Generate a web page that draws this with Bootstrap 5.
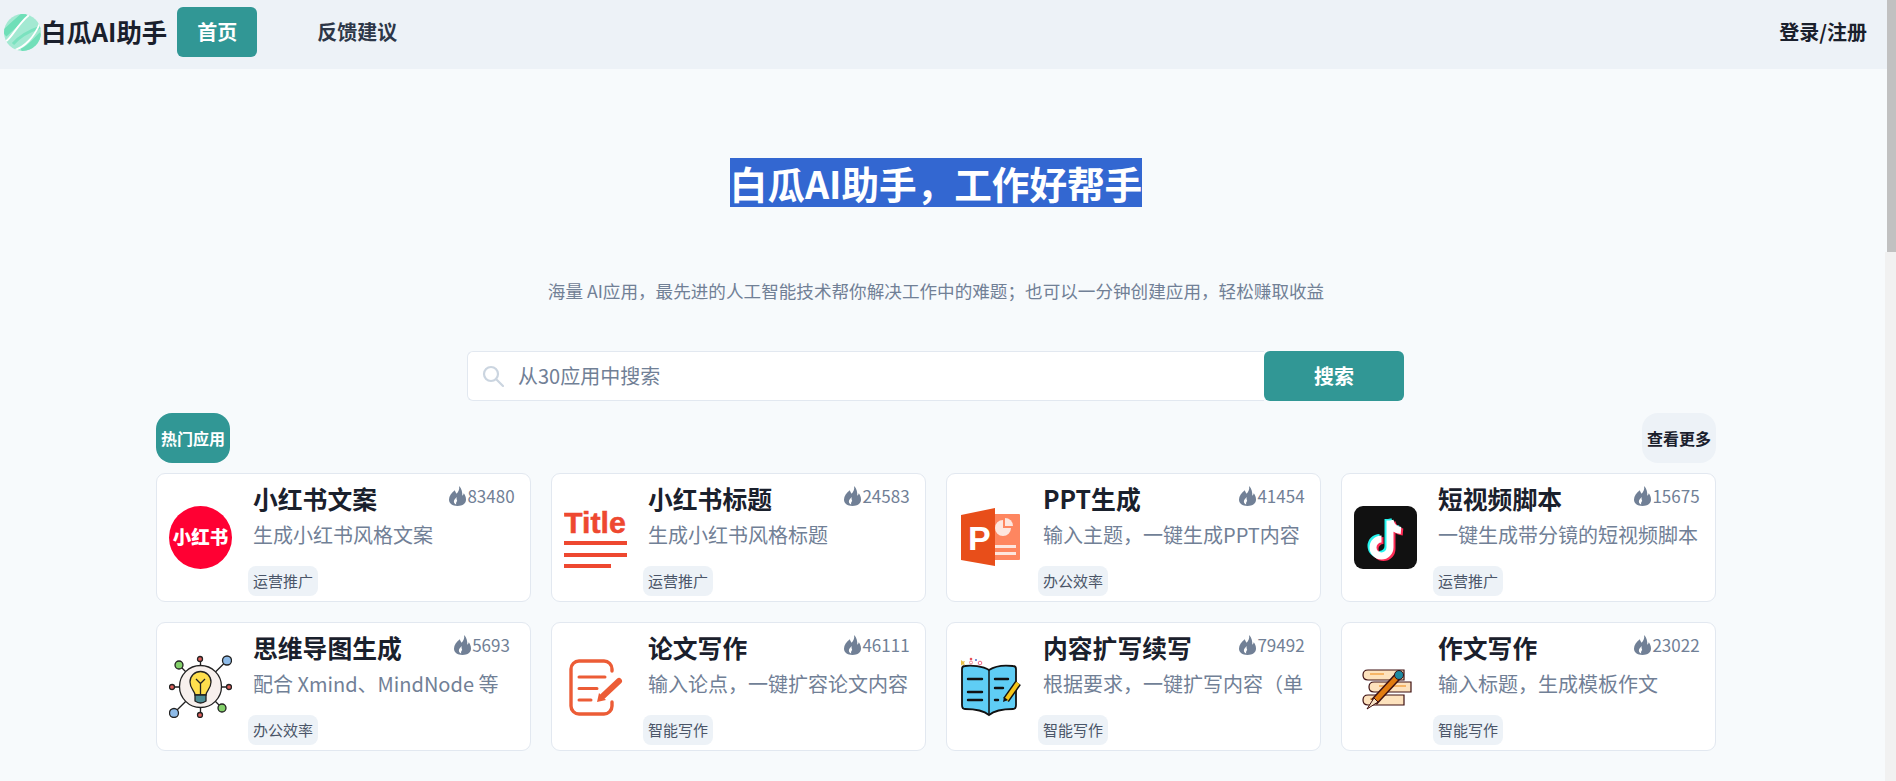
<!DOCTYPE html>
<html lang="zh-CN">
<head>
    <meta charset="UTF-8">
    <meta name="viewport" content="width=device-width, initial-scale=1.0">
    <title>白瓜AI助手</title>
    <link rel="stylesheet" href="https://cdn.jsdelivr.net/npm/bootstrap@5.3.0/dist/css/bootstrap.min.css">
    <style>
        body {
            background: #f7fafc;
            color: #1a202c;
            font-family: "Noto Sans CJK SC", sans-serif;
        }
        .top-bar { background: #edf2f7; height: 69px; padding: 0 29px 5px 4px; }
        .brand-link { color: #1a202c; font-size: 25.4px; font-weight: 700; text-decoration: none; gap: 0; line-height: 1; }
        .brand-link svg { width: 37px; height: 37px; }
        .menu-link { color: #2d3748; font-size: 20px; font-weight: 700; text-decoration: none; line-height: 50px; height: 50px; border-radius: 6px; width: 80px; text-align: center; }
        .menu-link.is-current { background: #319795; color: #fff; margin: 0 60px 0 10px; }
        .login-link { color: #1a202c; font-size: 20px; font-weight: 700; text-decoration: none; }
        .scroll-thumb { width: 9px; height: 252px; background: #c1c1c1; z-index: 10; }
        .scroll-track { width: 11px; top: 252px; bottom: 0; background: #f1f1f1; z-index: 10; }
        .page-wrap { width: 1560px; margin-left: 156px; }
        .hero-title { margin: 89px 0 0; font-size: 37.6px; font-weight: 700; line-height: 49px; }
        .hero-title span { background: #3367d1; color: #fff; }
        .hero-sub { margin: 69px 0 0; font-size: 17.6px; line-height: 30px; color: #718096; }
        .search-row { width: 937px; height: 50px; margin: 45px 0 0 311px; }
        .search-box { background: #fff; border: 1px solid #e2e8f0; border-radius: 6px 0 0 6px; border-right: 0; padding-left: 14px; gap: 14px; }
        .search-box svg { width: 22px; height: 22px; flex: none; }
        .search-box input { border: 0; background: transparent; padding: 0; font-size: 20px; color: #1a202c; box-shadow: none; }
        .search-box input::placeholder { color: #718096; opacity: 1; }
        .search-btn { width: 140px; background: #319795; color: #fff; font-size: 20px; font-weight: 700; border: 0; border-radius: 6px; }
        .section-head { margin-top: 12px; margin-bottom: 10px; }
        .pill-hot, .pill-more { height: 50px; width: 74px; border-radius: 16px; font-size: 16px; font-weight: 700; line-height: 50px; text-align: center; white-space: nowrap; text-decoration: none; }
        .pill-hot { background: #319795; color: #fff; }
        .pill-more { background: #edf2f7; color: #1a202c; }
        .app-row { --bs-gutter-x: 20px; --bs-gutter-y: 20px; }
        .app-card { height: 129px; background: #fff; border: 1px solid #e2e8f0; border-radius: 9px; flex-direction: row; align-items: center; padding-left: 12px; }
        .app-logo { width: 63px; height: 63px; flex: none; margin-right: 16px; }
        .app-body { height: 100%; padding: 4px 6px 5px 0; }
        .app-title { margin: 0; padding-left: 5px; font-size: 24.8px; font-weight: 700; line-height: 40px; white-space: nowrap; }
        .app-hot { width: 84px; flex: none; height: 36px; font-size: 17px; color: #718096; gap: 1px; }
        .app-hot svg { width: 17px; height: 20px; flex: none; }
        .app-desc { padding-left: 5px; font-size: 20px; line-height: 30px; color: #718096; white-space: nowrap; margin-top: 2px; }
        .app-tag { width: 70px; height: 30px; margin-top: auto; background: #edf2f7; color: #4a5568; border-radius: 8px; font-size: 15px; line-height: 30px; text-align: center; }
    </style>
</head>
<body>
    <svg width="0" height="0" class="d-block">
        <symbol id="flame" viewBox="0 0 16 18" preserveAspectRatio="none">
            <path fill="#718096" d="M9.500 0c.6 3.500-.8 5.200-2.300 7C6.300 6 5.700 5 5.500 3.800 2.400 6.200 0 9 0 12.200 0 15.900 3.100 18 8 18s8-2.200 8-5.800c0-2.600-1-4.300-2.100-5.700-.2 1-.7 1.700-1.400 2.200C12.700 5.600 11.900 2.200 9.500 0z"/>
            <path fill="#fff" d="M6.800 16.700c-1.500-.4-2.200-1.500-2.200-2.700 0-1.600 1.400-2.500 2.500-4 0 1.600.1 2.400.6 3.400-.9 1-1.300 2.100-.9 3.300z"/>
        </symbol>
    </svg>

    <!-- the window's scrollbar -->
    <div class="scroll-thumb position-fixed top-0 end-0"></div>
    <div class="scroll-track position-fixed end-0"></div>

    <!-- Top bar -->
    <nav class="top-bar d-flex align-items-center">
        <a class="brand-link d-flex align-items-center" href="#">
            <svg viewBox="0 0 37 37">
                <defs><clipPath id="logoClip"><circle cx="18.500" cy="18.500" r="18.500"/></clipPath></defs>
                <g clip-path="url(#logoClip)" fill="none">
                    <rect width="37" height="37" fill="#a3e9d2"/>
                    <path stroke="#6fdfb8" stroke-width="7" d="M0 20C6 14 14 7 22 0"/>
                    <path stroke="#7be2bf" stroke-width="3" d="M9 30C16 22 28 16 37 13"/>
                    <path stroke="#72dfb9" stroke-width="7" d="M18 38C26 35 32 27 38 21"/>
                    <path stroke="#fff" stroke-width="1.800" d="M1 28C8 24 12 12 25 1"/>
                    <path stroke="#fff" stroke-width="1.800" d="M11 36C20 33 30 24 36 9"/>
                </g>
            </svg>
            <span>白瓜AI助手</span>
        </a>
        <a class="menu-link is-current" href="#">首页</a>
        <a class="menu-link" href="#">反馈建议</a>
        <a class="login-link ms-auto" href="#">登录/注册</a>
    </nav>

    <main class="page-wrap">
        <!-- Hero -->
        <div class="text-center">
            <h1 class="hero-title"><span class="d-inline-block">白瓜AI助手，工作好帮手</span></h1>
            <p class="hero-sub">海量 AI应用，最先进的人工智能技术帮你解决工作中的难题；也可以一分钟创建应用，轻松赚取收益</p>
        </div>

        <!-- Search -->
        <div class="search-row d-flex">
            <div class="search-box d-flex align-items-center flex-grow-1">
                <svg viewBox="0 0 22 22" fill="none" stroke="#cbd5e0" stroke-width="2.200">
                    <circle cx="9" cy="9" r="7"/>
                    <path d="M14 14l7 7" stroke-linecap="round"/>
                </svg>
                <input class="form-control" type="text" placeholder="从30应用中搜索">
            </div>
            <button class="btn search-btn" type="button">搜索</button>
        </div>

        <div class="section-head d-flex justify-content-between">
            <div class="pill-hot">热门应用</div>
            <a class="pill-more" href="#">查看更多</a>
        </div>

        <!-- App cards -->
        <div class="row row-cols-4 app-row">
            <div class="col">
                <div class="card app-card">
                    <svg class="app-logo" viewBox="0 0 63 63">
                        <circle cx="31.500" cy="31.500" r="31.500" fill="#ff0033"/>
                        <text x="31.500" y="38" text-anchor="middle" fill="#fff" font-size="18.500" font-weight="900">小红书</text>
                    </svg>
                    <div class="app-body d-flex flex-column flex-grow-1">
                        <div class="d-flex justify-content-between">
                            <h5 class="app-title">小红书文案</h5>
                            <div class="app-hot d-flex align-items-center justify-content-center"><svg><use href="#flame"/></svg>83480</div>
                        </div>
                        <div class="app-desc">生成小红书风格文案</div>
                        <div class="app-tag">运营推广</div>
                    </div>
                </div>
            </div>
            <div class="col">
                <div class="card app-card">
                    <svg class="app-logo" viewBox="0 0 63 63">
                        <text x="0" y="27" fill="#ee4830" stroke="#ee4830" stroke-width=".5" font-size="30.400" font-weight="700" font-family="Liberation Sans">Title</text>
                        <rect y="35" width="63" height="4" fill="#ee4830"/>
                        <rect y="47" width="63" height="4" fill="#ee4830"/>
                        <rect y="58" width="47" height="4" fill="#ee4830"/>
                    </svg>
                    <div class="app-body d-flex flex-column flex-grow-1">
                        <div class="d-flex justify-content-between">
                            <h5 class="app-title">小红书标题</h5>
                            <div class="app-hot d-flex align-items-center justify-content-center"><svg><use href="#flame"/></svg>24583</div>
                        </div>
                        <div class="app-desc">生成小红书风格标题</div>
                        <div class="app-tag">运营推广</div>
                    </div>
                </div>
            </div>
            <div class="col">
                <div class="card app-card">
                    <svg class="app-logo" viewBox="0 0 63 63">
                        <rect x="34" y="8" width="27" height="46" rx="1" fill="#fe8660"/>
                        <path d="M44 14a8 8 0 1 0 8 8h-8z" fill="#fde6df"/>
                        <path d="M46 12a8 8 0 0 1 8 8h-8z" fill="#fde6df"/>
                        <rect x="36" y="39" width="21" height="3" fill="#fde6df"/>
                        <rect x="36" y="46" width="21" height="3" fill="#fde6df"/>
                        <path d="M2 9L36 2V60L2 54z" fill="#e84e1a"/>
                        <text x="9" y="44" fill="#fff" font-size="34" font-weight="700" font-family="Liberation Sans">P</text>
                    </svg>
                    <div class="app-body d-flex flex-column flex-grow-1">
                        <div class="d-flex justify-content-between">
                            <h5 class="app-title">PPT生成</h5>
                            <div class="app-hot d-flex align-items-center justify-content-center"><svg><use href="#flame"/></svg>41454</div>
                        </div>
                        <div class="app-desc">输入主题，一键生成PPT内容</div>
                        <div class="app-tag">办公效率</div>
                    </div>
                </div>
            </div>
            <div class="col">
                <div class="card app-card">
                    <svg class="app-logo" viewBox="0 0 63 63">
                        <rect width="63" height="63" rx="9" fill="#111"/>
                        <g fill="none" stroke-width="7">
                            <path stroke="#25f4ee" d="M34 13V40a8.500 8.500 0 1 1-8.500-8.500M34 13c1 5 5 9.500 11 10"/>
                            <path stroke="#fe2c55" d="M38 16V43a8.500 8.500 0 1 1-8.500-8.500M38 16c1 5 5 9.500 11 10"/>
                            <path stroke="#fff" d="M36 14.500V41.500a8.500 8.500 0 1 1-8.500-8.500M36 14.500c1 5 5 9.500 11 10"/>
                        </g>
                    </svg>
                    <div class="app-body d-flex flex-column flex-grow-1">
                        <div class="d-flex justify-content-between">
                            <h5 class="app-title">短视频脚本</h5>
                            <div class="app-hot d-flex align-items-center justify-content-center"><svg><use href="#flame"/></svg>15675</div>
                        </div>
                        <div class="app-desc">一键生成带分镜的短视频脚本</div>
                        <div class="app-tag">运营推广</div>
                    </div>
                </div>
            </div>
            <div class="col">
                <div class="card app-card">
                    <svg class="app-logo" viewBox="0 0 63 63">
                        <g stroke="#222" stroke-width="1.300">
                            <path d="M31.500 4V60M3 32H60M10 10L53 53M58 5.500L5 58" fill="none"/>
                            <circle cx="31.500" cy="31.500" r="21" fill="#f7f0ed"/>
                            <circle cx="31" cy="4" r="2.500" fill="#e0605c"/>
                            <circle cx="31" cy="60" r="2.500" fill="#e0605c"/>
                            <circle cx="3" cy="32" r="2.500" fill="#e0605c"/>
                            <circle cx="60" cy="32" r="2.500" fill="#e0605c"/>
                            <circle cx="58" cy="5.500" r="4.500" fill="#8ebbe8"/>
                            <circle cx="5" cy="58" r="4.500" fill="#8ebbe8"/>
                            <circle cx="10" cy="10" r="4" fill="#83d06a"/>
                            <circle cx="53" cy="53" r="4" fill="#83d06a"/>
                            <path d="M26 40c0-4-5-6-5-13a10.500 10.500 0 0 1 21 0c0 7-5 9-5 13z" fill="#ffdf4d"/>
                            <path d="M26 40H37V46Q31.500 50 26 46z" fill="#4d8d95"/>
                            <path d="M31.500 40V28M27 24l4.500 4.500L36 24" fill="none"/>
                        </g>
                    </svg>
                    <div class="app-body d-flex flex-column flex-grow-1">
                        <div class="d-flex justify-content-between">
                            <h5 class="app-title">思维导图生成</h5>
                            <div class="app-hot d-flex align-items-center justify-content-center"><svg><use href="#flame"/></svg>5693</div>
                        </div>
                        <div class="app-desc">配合 Xmind、MindNode 等</div>
                        <div class="app-tag">办公效率</div>
                    </div>
                </div>
            </div>
            <div class="col">
                <div class="card app-card">
                    <svg class="app-logo" viewBox="0 0 63 63">
                        <g fill="none" stroke="#ec5c36" stroke-linecap="round">
                            <path stroke-width="3.400" d="M48 16V14a8 8 0 0 0-8-8H15a8 8 0 0 0-8 8V51a8 8 0 0 0 8 8H40a8 8 0 0 0 8-8V47"/>
                            <path stroke-width="3" d="M15 22H41M15 33.500H33M15 45H27"/>
                            <path stroke-width="6" d="M55 26L39 41"/>
                        </g>
                        <path fill="#ec5c36" d="M35 38L42 45L33 47z"/>
                    </svg>
                    <div class="app-body d-flex flex-column flex-grow-1">
                        <div class="d-flex justify-content-between">
                            <h5 class="app-title">论文写作</h5>
                            <div class="app-hot d-flex align-items-center justify-content-center"><svg><use href="#flame"/></svg>46111</div>
                        </div>
                        <div class="app-desc">输入论点，一键扩容论文内容</div>
                        <div class="app-tag">智能写作</div>
                    </div>
                </div>
            </div>
            <div class="col">
                <div class="card app-card">
                    <svg class="app-logo" viewBox="0 0 63 63">
                        <circle cx="12" cy="4" r="1.300" fill="#e8505b"/>
                        <circle cx="17" cy="5" r="1" fill="#4a6fd0"/>
                        <circle cx="12" cy="7.500" r="1.500" fill="none" stroke="#f08a9a"/>
                        <circle cx="21" cy="8" r="1.800" fill="none" stroke="#f0688a"/>
                        <path d="M2 5l2 1.500L6 6 5 8l1 2-2.500-.5L2 10.500z" fill="#e8c04a"/>
                        <path d="M30 15C24 11 12 10 6 11Q3 11 3 14V50Q3 54 6 54C14 54 24 55 30 60 36 55 46 54 54 54Q57 54 57 50V14Q57 11 54 11C46 10 36 11 30 15z" fill="#5fcdf5" stroke="#111" stroke-width="1.800"/>
                        <path d="M30 15V60" stroke="#111" stroke-width="1.500"/>
                        <path d="M9 24H23M9 37H23M9 45H23M36 24H49M36 33H44M36 45H39" stroke="#111" stroke-width="2.400" stroke-linecap="round"/>
                        <path d="M59 28L47 45" stroke="#111" stroke-width="7"/>
                        <path d="M59 28L47 45" stroke="#f5c518" stroke-width="4"/>
                        <path d="M44 47l1-5 4 3z" fill="#111"/>
                    </svg>
                    <div class="app-body d-flex flex-column flex-grow-1">
                        <div class="d-flex justify-content-between">
                            <h5 class="app-title">内容扩写续写</h5>
                            <div class="app-hot d-flex align-items-center justify-content-center"><svg><use href="#flame"/></svg>79492</div>
                        </div>
                        <div class="app-desc">根据要求，一键扩写内容（单</div>
                        <div class="app-tag">智能写作</div>
                    </div>
                </div>
            </div>
            <div class="col">
                <div class="card app-card">
                    <svg class="app-logo" viewBox="0 0 63 63">
                        <g stroke="#3d0f10" stroke-width="1.200">
                            <path d="M50 15H14Q9 15 9 20T14 25H50z" fill="#fde2bd"/>
                            <path d="M57 27H20Q15 27 15 32T20 37H57z" fill="#fde2bd"/>
                            <path d="M50 40H14Q9 40 9 45T14 50H50z" fill="#fde2bd"/>
                        </g>
                        <path d="M16 19H30M25 31H52M16 44H26" stroke="#f3a64a" stroke-width="1.500"/>
                        <path d="M46 19L20 47" stroke="#3d0f10" stroke-width="8"/>
                        <path d="M46 19L20 47" stroke="#e07b10" stroke-width="5"/>
                        <path d="M20 43L24 47 13 54z" fill="#f7e2c4" stroke="#3d0f10"/>
                        <circle cx="45" cy="20" r="4.500" fill="#1f8aa0" stroke="#3d0f10"/>
                    </svg>
                    <div class="app-body d-flex flex-column flex-grow-1">
                        <div class="d-flex justify-content-between">
                            <h5 class="app-title">作文写作</h5>
                            <div class="app-hot d-flex align-items-center justify-content-center"><svg><use href="#flame"/></svg>23022</div>
                        </div>
                        <div class="app-desc">输入标题，生成模板作文</div>
                        <div class="app-tag">智能写作</div>
                    </div>
                </div>
            </div>
        </div>
    </main>

    <script src="https://cdn.jsdelivr.net/npm/bootstrap@5.3.0/dist/js/bootstrap.bundle.min.js"></script>
</body>
</html>
